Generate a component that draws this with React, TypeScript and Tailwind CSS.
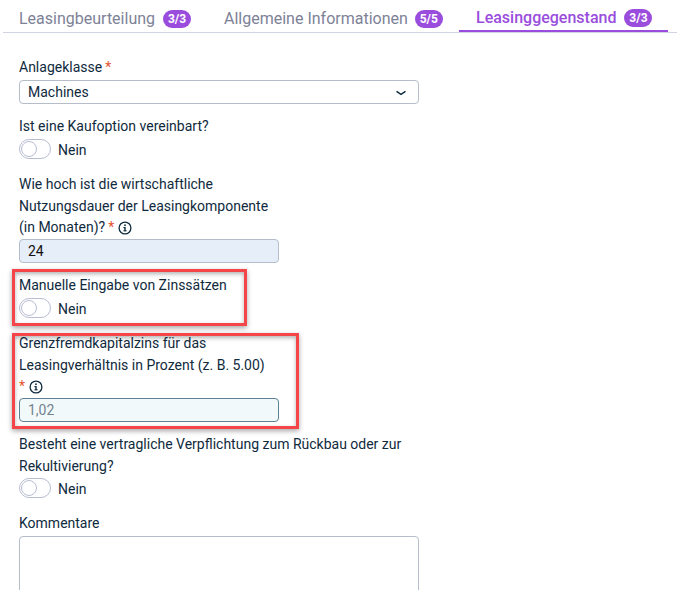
import React from "react";

const Star = () => <span className="text-[#e5532d] ml-[3px]">*</span>;

const Info = () => (
  <svg width="14" height="14" viewBox="0 0 14 14" fill="none" className="inline-block ml-[4px] align-[-3px]">
    <circle cx="7" cy="7" r="5.9" stroke="#0f2a3d" strokeWidth="1.3" />
    <rect x="6.3" y="6" width="1.4" height="4.2" fill="#0f2a3d" />
    <rect x="5.4" y="6" width="1.6" height="1.1" fill="#0f2a3d" />
    <rect x="5.4" y="9.3" width="3.2" height="1" fill="#0f2a3d" />
    <circle cx="7" cy="4.2" r="0.9" fill="#0f2a3d" />
  </svg>
);

const Toggle = () => (
  <div className="flex items-center h-[20px] gap-[7px]">
    <div className="w-[32px] h-[20px] rounded-full border border-[#b9bdd2] bg-white p-[1px] flex items-center">
      <div className="w-[16px] h-[16px] rounded-full border border-[#b9bdd2] bg-white" />
    </div>
    <span className="text-[14px] leading-[21px] text-[#0f2a3d] relative top-[1px]">Nein</span>
  </div>
);

const Tab = ({ label, badge, active, className }: { label: string; badge: string; active?: boolean; className: string }) => (
  <div className={`flex items-center h-[32px] pt-[5px] ${active ? "border-b-2 border-[#9a4ddd] text-[#9a4ddd] font-medium" : "text-[#7d8297]"} ${className}`}>
    <span className="text-[16px] leading-[20px] whitespace-nowrap">{label}</span>
    <span className="bg-[#9a4ddd] text-white rounded-full text-[12px] font-bold leading-[18px] h-[18px] w-[28px] text-center shrink-0">{badge}</span>
  </div>
);

export default function App() {
  return (
    <div className="relative w-[677px] h-[590px] overflow-hidden bg-white font-['Roboto',sans-serif] text-[14px] leading-[21.5px] text-[#0f2a3d]">
      <div className="ml-[3px] flex h-[33px] border-b border-[#d0d3e0]">
        <Tab label="Leasingbeurteilung" badge="3/3" className="pl-[16px] w-[205px] gap-[8px]" />
        <Tab label="Allgemeine Informationen" badge="5/5" className="pl-[16px] w-[251px] gap-[7px]" />
        <Tab label="Leasinggegenstand" badge="3/3" active className="pl-[17px] w-[209px] gap-[8px]" />
      </div>

      <div className="pl-[19px] pt-[23px] flex flex-col">
        <label className="block relative top-[1px]">Anlageklasse<Star /></label>
        <div className="mt-[2.5px] w-[400px] h-[24px] rounded-[4px] border border-[#b4bdc9] flex items-center justify-between pl-[8px] pr-[11px] pt-[1px]">
          <span>Machines</span>
          <svg width="12" height="12" viewBox="0 0 12 12" fill="none">
            <path d="M1.5 4.3 L6 7.3 L10.5 4.3" stroke="#0f2a3d" strokeWidth="1.4" />
          </svg>
        </div>

        <label className="block mt-[11.25px] relative top-[1px]">Ist eine Kaufoption vereinbart?</label>
        <div className="mt-[2.25px]"><Toggle /></div>

        <label className="block mt-[14.25px] w-[262px] relative top-[1px]">
          Wie hoch ist die wirtschaftliche Nutzungsdauer der Leasingkomponente (in Monaten)?<Star /><Info />
        </label>
        <div className="mt-[1.25px] w-[260px] h-[24px] rounded-[4px] border border-[#b4bdc9] bg-[#e6eefa] flex items-center pl-[8px] pt-[1px] text-[#111]">24</div>

        <label className="block mt-[11.25px] relative top-[1px]">Manuelle Eingabe von Zinssätzen</label>
        <div className="mt-[2.25px]"><Toggle /></div>

        <label className="block mt-[14.25px] w-[270px] relative top-[1px]">
          Grenzfremdkapitalzins für das Leasingverhältnis in Prozent (z. B. 5.00)<span className="block"><span className="text-[#e5532d]">*</span><Info /></span>
        </label>
        <div className="mt-[1.25px] w-[260px] h-[24px] rounded-[4px] border border-[#5f7f94] bg-[#f2f9fa] flex items-center pl-[8px] pt-[2px] text-[#73838f]">1,02</div>

        <label className="block mt-[11.25px] w-[400px] relative top-[1px]">Besteht eine vertragliche Verpflichtung zum Rückbau oder zur Rekultivierung?</label>
        <div className="mt-[1.75px]"><Toggle /></div>

        <label className="block mt-[14.25px] relative top-[1px]">Kommentare</label>
        <div className="mt-[2.25px] w-[400px] h-[80px] rounded-[4px] border border-[#b4bdc9] bg-white shrink-0" />
      </div>

      <div className="absolute left-[12px] top-[269px] w-[235px] h-[57px] border-[3px] border-[#f44649] shadow-[0_2px_5px_rgba(0,0,0,0.35),inset_0_2px_4px_rgba(0,0,0,0.3)]" />
      <div className="absolute left-[12px] top-[333px] w-[287px] h-[96px] border-[3px] border-[#f44649] shadow-[0_2px_5px_rgba(0,0,0,0.35),inset_0_2px_4px_rgba(0,0,0,0.3)]" />
    </div>
  );
}
